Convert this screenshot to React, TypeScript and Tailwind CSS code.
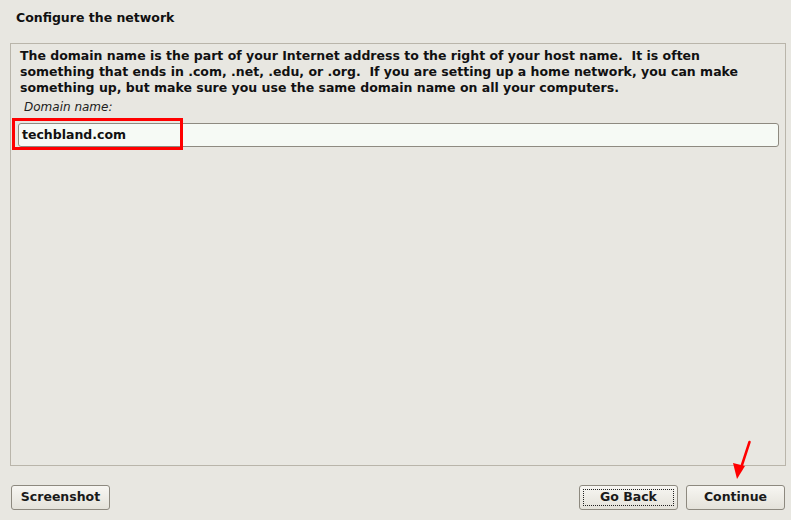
import React from "react";

const FONT = { fontFamily: '"DejaVu Sans", Verdana, sans-serif' };

function Button({ label, focused }: { label: string; focused?: boolean }) {
  return (
    <button
      className="relative w-[99px] h-[25px] rounded-[3px] border border-[#8d897f] bg-gradient-to-b from-[#f7f6f2] to-[#e4e2da] text-[12.5px] font-bold text-[#1a1a1a] leading-none"
    >
      {focused && (
        <span className="absolute inset-[3px] border border-dotted border-[#222]" />
      )}
      <span className="relative">{label}</span>
    </button>
  );
}

export default function App() {
  return (
    <div
      className="relative w-[791px] h-[520px] flex flex-col bg-[#e8e7e1] text-[#111] overflow-hidden"
      style={FONT}
    >
      <div className="h-[43px] pl-4 pt-[10px] text-[12.5px] font-bold leading-4">
        Configure the network
      </div>

      <div className="ml-[10px] mr-[5px] h-[423px] border border-[#b9b5aa] flex flex-col">
        <div className="pl-[9px] pt-[4px] text-[12.5px] font-bold leading-4 whitespace-pre">
          {"The domain name is the part of your Internet address to the right of your host name.  It is often\nsomething that ends in .com, .net, .edu, or .org.  If you are setting up a home network, you can make\nsomething up, but make sure you use the same domain name on all your computers."}
        </div>
        <div className="pl-[13px] mt-[3px] h-[16px] text-[12px] italic leading-4 text-[#222]">
          Domain name:
        </div>
        <div className="mt-[8px] ml-[7px] mr-[6px] h-[24px] rounded-[3px] border border-[#8e8a80] bg-[#f6faf5] flex items-center pl-[3px] text-[12.5px] font-bold">
          techbland.com
        </div>
      </div>

      <div className="mt-[19px] flex gap-2 pl-[11px] pr-[6px]">
        <Button label="Screenshot" />
        <div className="flex-1" />
        <Button label="Go Back" focused />
        <Button label="Continue" />
      </div>

      {/* red highlight */}
      <div className="absolute left-[12px] top-[118px] w-[171px] h-[32px] border-[3px] border-[#ff0000]" />

      {/* red arrow */}
      <svg className="absolute left-0 top-0" width="791" height="520">
        <line x1="749.5" y1="442" x2="741" y2="468" stroke="#ff0000" strokeWidth="2.5" strokeLinecap="round" />
        <polygon points="737,479 733,463 745,466" fill="#ff0000" />
      </svg>
    </div>
  );
}
